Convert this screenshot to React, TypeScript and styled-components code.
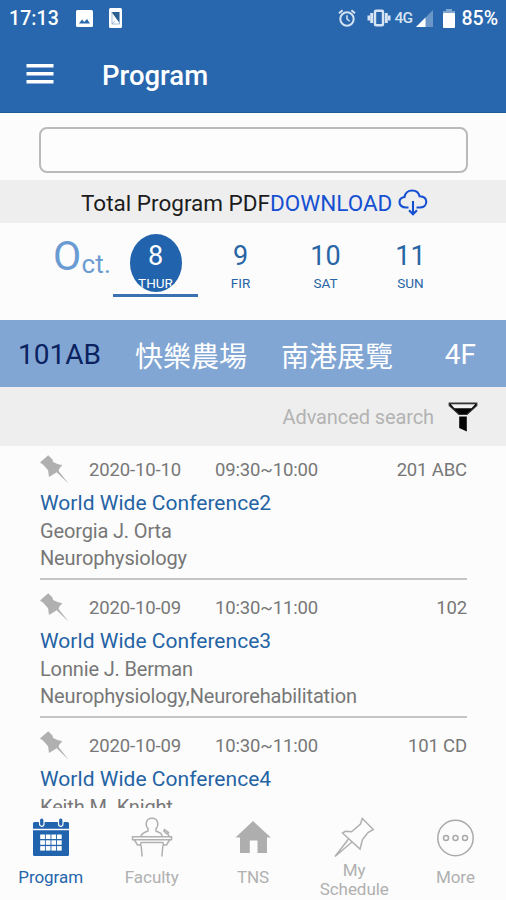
import React from "react";
import styled, { createGlobalStyle } from "styled-components";

const Global = createGlobalStyle`
  * { box-sizing: border-box; }
  body {
    margin: 0;
    background: #fcfcfc;
    font-family: Roboto, "Noto Sans CJK TC", sans-serif;
  }
`;

const Screen = styled.div`
  display: flex;
  flex-direction: column;
  width: 506px;
  height: 900px;
  overflow: hidden;
  background: #fcfcfc;
`;

const Header = styled.header`
  flex: none;
  height: 113px;
  background: #2867ae;
  border-bottom: 1px solid #22599a;
  color: #fff;
`;

const StatusBar = styled.div`
  display: flex;
  align-items: center;
  height: 36px;
  padding: 0 8px 0 9px;
`;

const Clock = styled.span`
  width: 67px;
  padding-top: 2px;
  font-size: 19.5px;
  font-weight: 500;
  letter-spacing: 0.1px;
  line-height: 36px;
`;

const NoticeIcons = styled.div`
  display: flex;
  align-items: center;
  gap: 16px;
`;

const StatusIcons = styled.div`
  display: flex;
  align-items: center;
  margin-left: auto;
`;

const StatusGap = styled.span<{ $width: number }>`
  width: ${(p) => p.$width}px;
`;

const Network = styled.span`
  margin: 0 4px 0 4px;
  font-size: 15.5px;
  font-weight: 500;
  letter-spacing: -0.7px;
  color: #d5e3f2;
`;

const Battery = styled.span`
  margin-left: 6px;
  font-size: 19.5px;
  font-weight: 500;
`;

const TitleBar = styled.div`
  display: flex;
  align-items: center;
  height: 76px;
  padding: 0 0 0 26px;
`;

const Title = styled.h1`
  margin: 3px 0 0 48px;
  font-size: 27.5px;
  font-weight: 500;
  line-height: 32px;
`;

const SearchArea = styled.div`
  flex: none;
  height: 67px;
  padding: 14px 39px 0 39px;
`;

const SearchInput = styled.input`
  display: block;
  width: 429px;
  height: 46px;
  border: 2px solid #bababa;
  border-radius: 8px;
  background: #fdfdfd;
  outline: none;
`;

const PdfBar = styled.div`
  flex: none;
  display: flex;
  align-items: center;
  height: 43px;
  padding: 2px 0 0 81px;
  background: #eee;
  color: #1c1c1c;
  font-size: 22.5px;
  white-space: nowrap;
`;

const Download = styled.a`
  display: flex;
  align-items: center;
  gap: 6px;
  color: #1650d2;
`;

const DateBar = styled.div`
  flex: none;
  display: flex;
  height: 97px;
  padding-left: 53px;
`;

const Month = styled.div`
  width: 60px;
  padding-top: 9px;
  color: #6a9bd2;
  font-size: 26px;
  letter-spacing: 0.2px;
  line-height: 48px;
  white-space: nowrap;
`;

const MonthInitial = styled.span`
  font-size: 41px;
`;

const MonthRest = styled.span`
  position: relative;
  top: 3px;
`;

const Day = styled.button<{ $active?: boolean }>`
  display: flex;
  justify-content: center;
  width: 85px;
  height: 74px;
  padding: 11px 0 0;
  border: 0;
  border-bottom: 3px solid ${(p) => (p.$active ? "#3a71b0" : "transparent")};
  background: none;
  font-family: inherit;
  color: ${(p) => (p.$active ? "#fff" : "#2765a5")};
`;

const DayDisc = styled.span<{ $active?: boolean }>`
  display: flex;
  flex-direction: column;
  align-items: center;
  width: 52px;
  height: 58px;
  padding-top: 7px;
  overflow: hidden;
  border-radius: 50%;
  background: ${(p) => (p.$active ? "#2163ac" : "transparent")};
`;

const DayNumber = styled.span`
  font-size: 27px;
  line-height: 30px;
`;

const DayName = styled.span`
  margin-top: 4px;
  font-size: 13.5px;
  line-height: 16px;
`;

const RoomBar = styled.nav`
  flex: none;
  display: flex;
  align-items: center;
  height: 67px;
  padding: 2px 30px 0 18px;
  background: #82a6d4;
  font-size: 28px;
`;

const Room = styled.span<{ $active?: boolean }>`
  margin-right: 34px;
  white-space: nowrap;
  color: ${(p) => (p.$active ? "#0a2260" : "#fff")};

  &:last-child {
    margin: 0 0 0 auto;
  }
`;

const AdvancedBar = styled.div`
  flex: none;
  display: flex;
  align-items: center;
  justify-content: flex-end;
  gap: 14px;
  height: 59px;
  padding-right: 28px;
  background: #eee;
  color: #b3b3b3;
  font-size: 20px;
  letter-spacing: -0.1px;
`;

const Sessions = styled.main`
  flex: 1;
  min-height: 0;
  overflow: hidden;
  padding: 0 39px 0 40px;
`;

const Session = styled.article`
  height: 134px;
  margin-bottom: 4px;
  padding-top: 8px;
  border-bottom: 2px solid #c4c4c4;
  color: #777;
  font-size: 20px;
  letter-spacing: -0.15px;
`;

const SessionMeta = styled.div`
  display: grid;
  grid-template-columns: 49px 126px 1fr auto;
  align-items: center;
  height: 32px;
  font-size: 18.5px;
`;

const SessionTitle = styled.h2`
  margin: 3px 0 1px;
  color: #2463a4;
  font-size: 21px;
  font-weight: 400;
  letter-spacing: 0.03px;
  line-height: 28px;
`;

const SessionLine = styled.div`
  line-height: 26.5px;
`;

const TabBar = styled.nav`
  flex: none;
  display: flex;
  height: 92px;
`;

const Tab = styled.a<{ $active?: boolean }>`
  display: flex;
  flex: 1;
  flex-direction: column;
  align-items: center;
  padding-top: 8px;
  color: ${(p) => (p.$active ? "#2465ac" : "#b0b0b0")};
`;

const TabLabel = styled.span<{ $lines?: number }>`
  display: flex;
  flex: none;
  align-items: center;
  height: 40px;
  margin-top: ${(p) => (p.$lines === 2 ? "2px" : "-1px")};
  font-size: 17px;
  line-height: 19px;
  letter-spacing: -0.05px;
  text-align: center;
  white-space: pre-line;
`;

const PictureIcon = () => (
  <svg width="17" height="17" viewBox="0 0 17 17">
    <rect width="17" height="17" rx="1.5" fill="#fff" />
    <path d="M3 13.5 6 9.5l2.2 2.6L11 9l3 4.5z" fill="#2867ae" />
  </svg>
);

const PhoneCardIcon = () => (
  <svg width="13" height="20" viewBox="0 0 13 20">
    <rect width="13" height="20" rx="1.5" fill="#fff" />
    <path d="M2.500 4h8v11z" fill="#2e5f93" />
    <path d="M3 4v12h7.500V4M3 16l3-3" fill="none" stroke="#8aa9cb" strokeWidth=".8" />
  </svg>
);

const AlarmIcon = () => (
  <svg width="18" height="18" viewBox="0 0 18 18" fill="none" stroke="#d5e3f2" strokeWidth="2">
    <circle cx="9" cy="10" r="6.700" />
    <path d="M9 6.200V10l2.600 2.300" strokeWidth="1.500" />
    <path d="M1 4.200 4.600 1.200M17 4.200 13.400 1.200" />
  </svg>
);

const VibrateIcon = () => (
  <svg width="24" height="18" viewBox="0 0 24 18" fill="none" stroke="#d5e3f2">
    <rect x="8" y="1.700" width="8" height="14.600" rx="1" strokeWidth="2.400" />
    <path d="M4.700 4v10M19.300 4v10" strokeWidth="3" />
    <path d="M1.800 6.500v5M22.200 6.500v5" strokeWidth="2.600" />
  </svg>
);

const SignalIcon = () => (
  <svg width="17" height="17" viewBox="0 0 17 17">
    <path d="M17 0v17H0z" fill="#6b96c8" />
    <path d="M9.500 7.500V17H0z" fill="#fff" />
  </svg>
);

const BatteryIcon = () => (
  <svg width="12" height="19" viewBox="0 0 12 19">
    <path d="M3 0h6v2h3v3H0V2h3z" fill="#7fa5d1" />
    <rect y="4" width="12" height="15" rx="1" fill="#fff" />
  </svg>
);

const MenuIcon = () => (
  <svg width="28" height="20" viewBox="0 0 28 20" fill="#fff">
    <path d="M.5 0h27v3.400H.5zM.5 8h27v3.400H.5zM.5 16h27v3.400H.5z" />
  </svg>
);

const CloudIcon = () => (
  <svg width="30" height="28" viewBox="0 0 30 28" fill="none" stroke="#1650d2" strokeWidth="2.100">
    <path d="M10.500 18.500H8C3.800 18.500 1.500 16 1.500 13.200c0-3 2.200-4.900 5-5.200C7 4 10.200 1.500 14.200 1.500c4 0 6.500 2.300 7.400 5.700 4 .2 6.700 2.300 6.700 5.600 0 3.400-2.600 5.700-6.300 5.700h-3.500" />
    <path d="M15 12v12.500M11 21.300l4 3.900 4-3.900" />
  </svg>
);

const FunnelIcon = () => (
  <svg width="30" height="31" viewBox="0 0 30 31">
    <path d="M1.200 2.200h27.600v2.200L19 13.500h-8L1.200 4.400z" fill="#050505" stroke="#333" strokeWidth="1.200" />
    <path d="M2.800 3.200h24.400l-3.700 4h-17z" fill="#f3f3f3" />
    <path d="M11.200 15.500h7.600v15l-7.600-3.500z" fill="#050505" />
  </svg>
);

const PinIcon = () => (
  <svg width="30" height="30" viewBox="0 0 30 30" fill="#b0b0b0">
    <path d="M0 7.500 8.200.3l4.300 4.200.6 2.500 4.400 2 4.800 1.300-3.100 3.500-.6 2.200 10 12.700L16.700 17.200 9 22l-.9-6.700-4.900-5.600z" />
  </svg>
);

const CalendarIcon = () => (
  <svg width="38" height="42" viewBox="0 0 38 42">
    <rect x="1" y="6" width="36" height="34" rx="1.500" fill="#2163ac" />
    <path d="M1 13.500h36" stroke="#fcfcfc" strokeWidth="1.500" />
    <g fill="#2163ac" stroke="#fcfcfc" strokeWidth="1.200">
      <rect x="7.500" y="1.800" width="4.500" height="8.500" rx="2.200" />
      <rect x="26.500" y="1.800" width="4.500" height="8.500" rx="2.200" />
    </g>
    <g fill="#fff">
      {[18.5, 24.3, 30.1].map((y) =>
        [8.2, 13.8, 19.4, 25].map((x) => <rect key={`${x}-${y}`} x={x} y={y} width="4.700" height="4.500" />)
      )}
    </g>
  </svg>
);

const SpeakerIcon = () => (
  <svg width="42" height="42" viewBox="0 0 42 42" fill="none" stroke="#b0b0b0" strokeWidth="1.500">
    <path d="M10 20.500c0-3.300 3-3.800 7-5.500v-2.500c-3-3-2.500-10.200 4-10.200s7 7.200 4 10.200V15c4 1.700 6 2.200 6 5.500" />
    <path d="M1.500 20.800h39v3h-39zM3.500 24l3 5h2.700l1-2.500h21.600l1 2.500h2.700l3-5M10 29l1.200 11.500M32 29l-1.200 11.500M38 20.500l-1.500-4M33.500 13.500l4 3-1.600 1.200-3-2.500z" />
  </svg>
);

const HomeIcon = () => (
  <svg width="36" height="42" viewBox="0 0 36 42" fill="#aeaeae">
    <path d="M18 5 0.500 21.500H5V37h9.800V24.500h7.700V37H32V21.500h3.800z" />
  </svg>
);

const PinOutlineIcon = () => (
  <svg width="42" height="42" viewBox="0 0 42 42" fill="none" stroke="#b0b0b0" strokeWidth="1.500">
    <path d="M29.300 2.500 40.300 13.500 35 16.500 29.500 23.500 27 33 9.500 17l3-1.800 6 .5L27.500 8z" />
    <path d="M15.500 23 2 40.500 19 26" />
  </svg>
);

const MoreIcon = () => (
  <svg width="40" height="42" viewBox="-1 0 40 42" fill="none" stroke="#aaa" strokeWidth="1.500">
    <circle cx="19.500" cy="22" r="17.700" />
    <circle cx="10" cy="22" r="2.500" />
    <circle cx="19.500" cy="22" r="2.500" />
    <circle cx="29" cy="22" r="2.500" />
  </svg>
);

const days = [
  { number: "8", name: "THUR", active: true },
  { number: "9", name: "FIR" },
  { number: "10", name: "SAT" },
  { number: "11", name: "SUN" },
];

const rooms = ["101AB", "快樂農場", "南港展覽", "4F"];

const sessions = [
  { date: "2020-10-10", time: "09:30~10:00", room: "201 ABC", title: "World Wide Conference2", speaker: "Georgia J. Orta", topic: "Neurophysiology" },
  { date: "2020-10-09", time: "10:30~11:00", room: "102", title: "World Wide Conference3", speaker: "Lonnie J. Berman", topic: "Neurophysiology,Neurorehabilitation" },
  { date: "2020-10-09", time: "10:30~11:00", room: "101 CD", title: "World Wide Conference4", speaker: "Keith M. Knight", topic: "" },
];

const tabs = [
  { label: "Program", Icon: CalendarIcon, active: true },
  { label: "Faculty", Icon: SpeakerIcon },
  { label: "TNS", Icon: HomeIcon },
  { label: "My\nSchedule", Icon: PinOutlineIcon, lines: 2 },
  { label: "More", Icon: MoreIcon },
];

export default function App() {
  return (
    <Screen>
      <Global />
      <Header>
        <StatusBar>
          <Clock>17:13</Clock>
          <NoticeIcons>
            <PictureIcon />
            <PhoneCardIcon />
          </NoticeIcons>
          <StatusIcons>
            <AlarmIcon />
            <StatusGap $width={11} />
            <VibrateIcon />
            <Network>4G</Network>
            <SignalIcon />
            <StatusGap $width={10} />
            <BatteryIcon />
            <Battery>85%</Battery>
          </StatusIcons>
        </StatusBar>
        <TitleBar>
          <MenuIcon />
          <Title>Program</Title>
        </TitleBar>
      </Header>
      <SearchArea>
        <SearchInput aria-label="Search" />
      </SearchArea>
      <PdfBar>
        <span>Total Program PDF</span>
        <Download>
          DOWNLOAD
          <CloudIcon />
        </Download>
      </PdfBar>
      <DateBar>
        <Month>
          <MonthInitial>O</MonthInitial>
          <MonthRest>ct.</MonthRest>
        </Month>
        {days.map((d) => (
          <Day key={d.name} $active={d.active}>
            <DayDisc $active={d.active}>
              <DayNumber>{d.number}</DayNumber>
              <DayName>{d.name}</DayName>
            </DayDisc>
          </Day>
        ))}
      </DateBar>
      <RoomBar>
        {rooms.map((room, i) => (
          <Room key={room} $active={i === 0}>
            {room}
          </Room>
        ))}
      </RoomBar>
      <AdvancedBar>
        Advanced search
        <FunnelIcon />
      </AdvancedBar>
      <Sessions>
        {sessions.map((s) => (
          <Session key={s.title}>
            <SessionMeta>
              <PinIcon />
              <span>{s.date}</span>
              <span>{s.time}</span>
              <span>{s.room}</span>
            </SessionMeta>
            <SessionTitle>{s.title}</SessionTitle>
            <SessionLine>{s.speaker}</SessionLine>
            <SessionLine>{s.topic}</SessionLine>
          </Session>
        ))}
      </Sessions>
      <TabBar>
        {tabs.map(({ label, Icon, active, lines }) => (
          <Tab key={label} $active={active}>
            <Icon />
            <TabLabel $lines={lines}>{label}</TabLabel>
          </Tab>
        ))}
      </TabBar>
    </Screen>
  );
}
